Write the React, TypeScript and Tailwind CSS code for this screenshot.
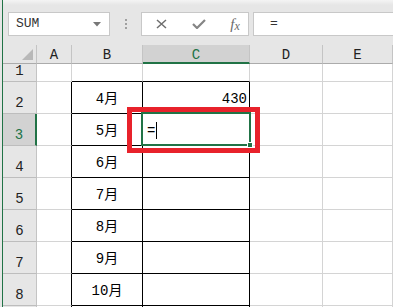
import React from "react";

const FONT = { fontFamily: '"Liberation Mono", "Noto Sans CJK JP", monospace' };

const COLS = [
  { key: "A", w: "w-[35px]" },
  { key: "B", w: "w-[71px]" },
  { key: "C", w: "w-[107px]" },
  { key: "D", w: "w-[73px]" },
  { key: "E", w: "flex-1" },
];

// row 9 only peeks in at the bottom edge, so it carries no text
const ROWS = [
  { n: 1, h: "h-[18px]", b: "", c: "" },
  { n: 2, h: "h-[32px]", b: "4月", c: "430" },
  { n: 3, h: "h-[32px]", b: "5月", c: "" },
  { n: 4, h: "h-[32px]", b: "6月", c: "" },
  { n: 5, h: "h-[32px]", b: "7月", c: "" },
  { n: 6, h: "h-[32px]", b: "8月", c: "" },
  { n: 7, h: "h-[32px]", b: "9月", c: "" },
  { n: 8, h: "h-[32px]", b: "10月", c: "" },
  { n: 9, h: "h-[32px]", b: "", c: "" },
];

const cellClass = (col: string, row: number) => {
  if (col === "A") {
    return row >= 2
      ? "border-r border-b border-r-black border-b-[#d4d4d4]"
      : "border-r border-b border-[#d4d4d4]";
  }
  if (col === "B" || col === "C") {
    return row >= 2
      ? "border-r border-b border-black"
      : "border-r border-b border-r-[#d4d4d4] border-b-black";
  }
  return "border-r border-b border-[#d4d4d4]";
};

const Toolbar = () => (
  <div className="h-[45px] shrink-0 bg-[#e6e6e6] relative">
    <div className="absolute inset-x-0 top-0 h-[5px] bg-linear-to-b from-[#f4f4f4] to-[#e6e6e6]" />
    <div className="relative flex items-start pt-[12px] pl-[5px]">
      {/* name box */}
      <div className="w-[102px] h-[24px] bg-white border border-[#c8c8c8] flex items-center justify-between pl-[7px] pr-[8px]">
        <span className="text-[13px] text-[#333]" style={FONT}>SUM</span>
        <svg width="8" height="5" viewBox="0 0 8 5">
          <polygon points="0,0 8,0 4,4.5" fill="#777" />
        </svg>
      </div>
      <div className="w-[31px] h-[24px] flex flex-col items-center justify-center gap-[2px]">
        <span className="w-[2px] h-[2px] bg-[#a0a0a0]" />
        <span className="w-[2px] h-[2px] bg-[#a0a0a0]" />
        <span className="w-[2px] h-[2px] bg-[#a0a0a0]" />
      </div>
      {/* cancel / enter / fx */}
      <div className="w-[108px] h-[24px] bg-white border border-[#c8c8c8] flex items-center">
        <div className="w-[36px] flex justify-center pl-[2px]">
          <svg width="11" height="10" viewBox="0 0 11 10">
            <path d="M1 1 L10 9 M10 1 L1 9" stroke="#6e6e6e" strokeWidth="1.5" />
          </svg>
        </div>
        <div className="w-[36px] flex justify-center pl-[6px]">
          <svg width="14" height="10" viewBox="0 0 14 10">
            <path d="M1 5 L5 9 L13 1" stroke="#858585" strokeWidth="2.2" fill="none" />
          </svg>
        </div>
        <div
          className="w-[34px] flex justify-center pl-[8px] text-[#6a6a6a] italic"
          style={{ fontFamily: '"Liberation Serif", serif' }}
        >
          <span className="text-[15px] leading-none">f</span>
          <span className="text-[12px] leading-none mt-[3px]">x</span>
        </div>
      </div>
      <div className="w-[4px]" />
      {/* formula input */}
      <div className="flex-1 h-[24px] bg-white border border-[#c8c8c8] border-r-0 flex items-center pl-[16px]">
        <span className="text-[13px] text-[#333]" style={FONT}>=</span>
      </div>
    </div>
  </div>
);

const HeaderRow = () => (
  <div className="flex h-[19px]" style={FONT}>
    <div className="w-[34px] h-full border-r border-b border-r-[#c4c4c4] border-b-[#ababab] bg-[#e6e6e6] flex items-end justify-end pr-[3px] pb-[3px]">
      <svg width="11" height="11" viewBox="0 0 11 11">
        <polygon points="11,0 11,11 0,11" fill="#b8b8b8" />
      </svg>
    </div>
    {COLS.map((c) =>
      c.key === "C" ? (
        <div
          key={c.key}
          className={`${c.w} h-full border-r border-r-[#c4c4c4] border-b-2 border-b-[#217346] bg-[#d2d2d2] flex items-end justify-center text-[14px] leading-none text-[#217346]`}
        >
          {c.key}
        </div>
      ) : (
        <div
          key={c.key}
          className={`${c.w} h-full border-r border-b border-r-[#c4c4c4] border-b-[#ababab] bg-[#e6e6e6] flex items-end justify-center text-[14px] leading-none text-[#222] pb-[1px]`}
        >
          {c.key}
        </div>
      )
    )}
  </div>
);

export default function App() {
  return (
    <div className="w-[393px] h-[307px] overflow-hidden flex bg-[#e6e6e6]" style={FONT}>
      <div className="w-[2px] shrink-0 bg-[#e6e6e6]" />
      <div className="w-[1px] shrink-0 bg-[#217346]" />
      <div className="flex-1 flex flex-col min-w-0">
        <Toolbar />
        <div className="relative flex-1 bg-white">
          <HeaderRow />
          {ROWS.map((r) => (
            <div key={r.n} className={`flex shrink-0 ${r.h}`}>
              {r.n === 3 ? (
                <div className="w-[34px] h-full border-r-2 border-b border-r-[#217346] border-b-[#bdbdbd] bg-[#d2d2d2] flex items-end justify-center pb-[3px] text-[14px] leading-none text-[#217346]">
                  {r.n}
                </div>
              ) : (
                <div className="w-[34px] h-full border-r border-b border-r-[#c4c4c4] border-b-[#bdbdbd] bg-[#e6e6e6] flex items-end justify-center pb-[3px] text-[14px] leading-none text-[#222]">
                  {r.n === 9 ? "" : r.n}
                </div>
              )}
              {COLS.map((c) => (
                <div
                  key={c.key}
                  className={`${c.w} h-full ${cellClass(c.key, r.n)} flex items-center text-[14px] text-black ${
                    c.key === "B" ? "justify-center pt-[3px]" : ""
                  } ${c.key === "C" ? "justify-end pr-[2px] pt-[3px]" : ""}`}
                >
                  {c.key === "B" ? r.b : c.key === "C" ? r.c : ""}
                </div>
              ))}
            </div>
          ))}

          {/* active cell C3 */}
          <div className="absolute left-[138px] top-[67px] w-[110px] h-[34px] border-2 border-[#217346]">
            <div className="absolute left-[4px] top-[8px] flex items-center text-[14px] text-black leading-none">
              <span>=</span>
              <span className="ml-[1px] w-[1px] h-[17px] bg-black" />
            </div>
            <div className="absolute right-[-4px] bottom-[-4px] w-[6px] h-[6px] bg-[#217346] border border-white" />
          </div>

          {/* red highlight */}
          <div className="absolute left-[124px] top-[62px] w-[133px] h-[46px] border-[5px] border-[#e8222b]" />
        </div>
      </div>
    </div>
  );
}
